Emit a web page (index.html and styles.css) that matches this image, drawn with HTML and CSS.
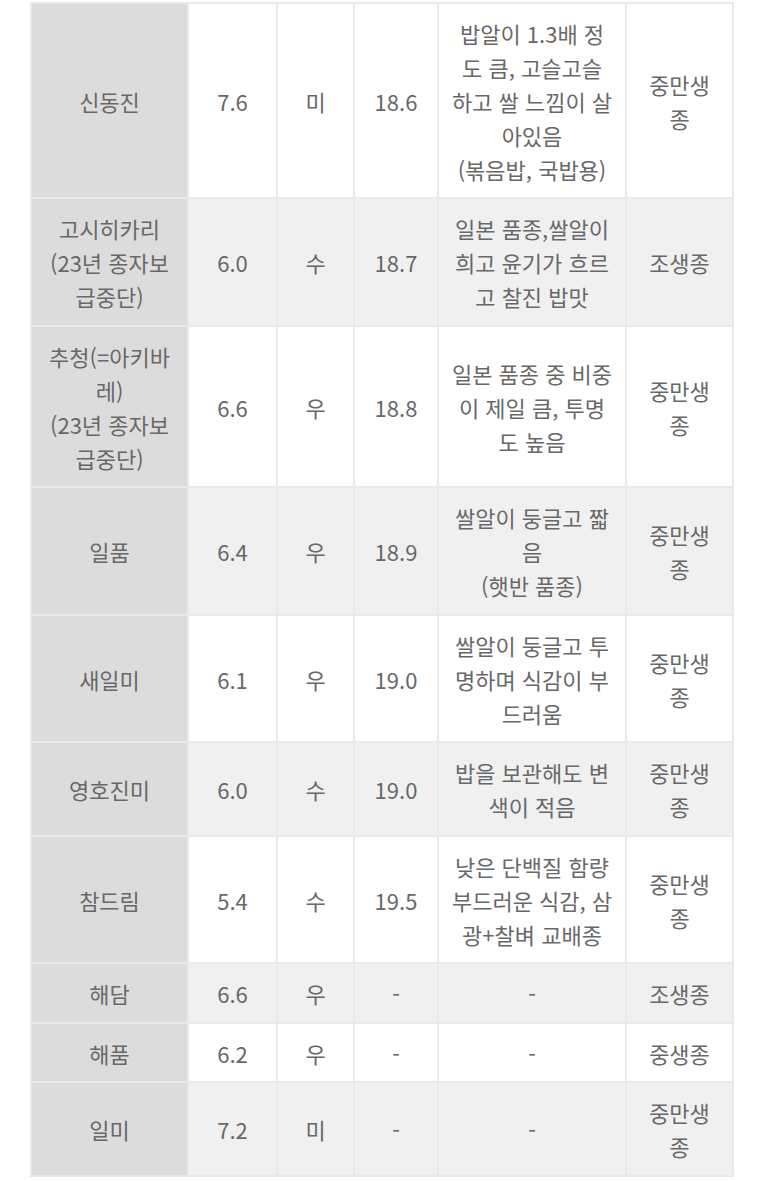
FILE: index.html
```html
<!DOCTYPE html>
<html lang="ko">
<head>
<meta charset="utf-8">
<link rel="stylesheet" href="styles.css">
</head>
<body>
<div class="wrap">
<table class="rice">
  <colgroup>
    <col class="c1"><col class="c2"><col class="c3"><col class="c4"><col class="c5"><col class="c6">
  </colgroup>
  <tbody>
    <tr>
      <th>신동진</th><td>7.6</td><td>미</td><td>18.6</td>
      <td>밥알이 1.3배 정<br>도 큼, 고슬고슬<br>하고 쌀 느낌이 살<br>아있음<br>(볶음밥, 국밥용)</td>
      <td>중만생<br>종</td>
    </tr>
    <tr class="alt">
      <th>고시히카리<br>(23년 종자보<br>급중단)</th><td>6.0</td><td>수</td><td>18.7</td>
      <td>일본 품종,쌀알이<br>희고 윤기가 흐르<br>고 찰진 밥맛</td>
      <td>조생종</td>
    </tr>
    <tr>
      <th>추청(=아키바<br>레)<br>(23년 종자보<br>급중단)</th><td>6.6</td><td>우</td><td>18.8</td>
      <td>일본 품종 중 비중<br>이 제일 큼, 투명<br>도 높음</td>
      <td>중만생<br>종</td>
    </tr>
    <tr class="alt">
      <th>일품</th><td>6.4</td><td>우</td><td>18.9</td>
      <td>쌀알이 둥글고 짧<br>음<br>(햇반 품종)</td>
      <td>중만생<br>종</td>
    </tr>
    <tr>
      <th>새일미</th><td>6.1</td><td>우</td><td>19.0</td>
      <td>쌀알이 둥글고 투<br>명하며 식감이 부<br>드러움</td>
      <td>중만생<br>종</td>
    </tr>
    <tr class="alt">
      <th>영호진미</th><td>6.0</td><td>수</td><td>19.0</td>
      <td>밥을 보관해도 변<br>색이 적음</td>
      <td>중만생<br>종</td>
    </tr>
    <tr>
      <th>참드림</th><td>5.4</td><td>수</td><td>19.5</td>
      <td>낮은 단백질 함량<br>부드러운 식감, 삼<br>광+찰벼 교배종</td>
      <td>중만생<br>종</td>
    </tr>
    <tr class="alt">
      <th>해담</th><td>6.6</td><td>우</td><td>-</td><td>-</td><td>조생종</td>
    </tr>
    <tr>
      <th>해품</th><td>6.2</td><td>우</td><td>-</td><td>-</td><td>중생종</td>
    </tr>
    <tr class="alt">
      <th>일미</th><td>7.2</td><td>미</td><td>-</td><td>-</td><td>중만생<br>종</td>
    </tr>
  </tbody>
</table>
</div>
</body>
</html>
```
FILE: styles.css
```css
html, body {
  margin: 0;
  padding: 0;
  background: #ffffff;
}
.wrap {
  padding: 1.5px 0 0 30px;
}
.rice {
  border-collapse: collapse;
  table-layout: fixed;
  width: 703px;
  font-family: "Noto Sans CJK KR", "Noto Sans", sans-serif;
  font-size: 22px;
  line-height: 34px;
  color: #686868;
}
.c1 { width: 157px; }
.c2 { width: 89px; }
.c3 { width: 77px; }
.c4 { width: 84px; }
.c5 { width: 188px; }
.c6 { width: 107px; }
.rice th,
.rice td {
  border: 2px solid #e9e9e9;
  padding: 12px 1px 11.5px;
  text-align: center;
  vertical-align: middle;
  font-weight: 400;
  background: #ffffff;
  white-space: nowrap;
}
.rice th {
  background: #dcdcdc;
}
.rice tr.alt td {
  background: #f0f0f0;
}
```
